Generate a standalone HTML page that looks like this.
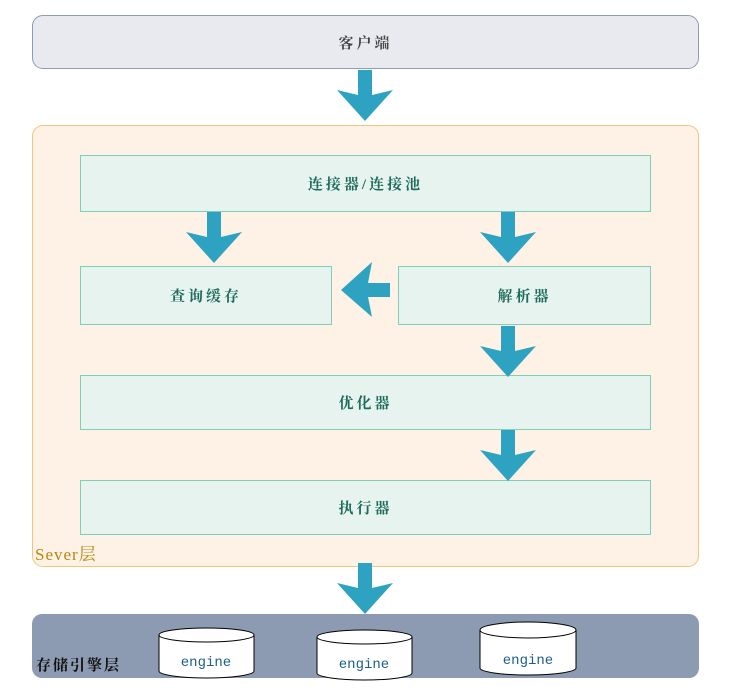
<!DOCTYPE html>
<html><head><meta charset="utf-8"><style>
body{margin:0;width:731px;height:700px;background:#fff;position:relative;overflow:hidden;font-family:"Liberation Serif","Noto Serif CJK SC",serif}
.b{position:absolute;box-sizing:border-box;display:flex;align-items:center;justify-content:center;font-size:15px;letter-spacing:3px;font-weight:bold}
.g{background:#e6f3ee;border:1px solid #7dcfb6;color:#1d6b5c}
svg{position:absolute}
</style></head><body>
<div class="b" style="left:32px;top:15px;width:667px;height:54px;background:#e8eaef;border:1px solid #8e9bb5;border-radius:11px;color:#444">客户端</div>
<div style="position:absolute;left:32px;top:125px;width:667px;height:442px;box-sizing:border-box;background:#fef1e6;border:1px solid #f5c27c;border-radius:11px"></div>
<div style="position:absolute;left:35px;top:540px;font-size:17px;color:#b8860b;letter-spacing:1px">Sever层</div>
<div class="b g" style="left:80px;top:155px;width:571px;height:57px">连接器/连接池</div>
<div class="b g" style="left:80px;top:266px;width:252px;height:59px">查询缓存</div>
<div class="b g" style="left:398px;top:266px;width:253px;height:59px">解析器</div>
<div class="b g" style="left:80px;top:375px;width:571px;height:55px">优化器</div>
<div class="b g" style="left:80px;top:480px;width:571px;height:55px">执行器</div>
<div style="position:absolute;left:32px;top:614px;width:667px;height:64px;background:#8c9bb2;border-radius:10px"></div>
<div style="position:absolute;left:36px;top:654px;font-size:15px;font-weight:bold;letter-spacing:2px;color:#111">存储引擎层</div>
<svg width="731" height="700" style="left:0;top:0">
<defs><polygon id="a" points="21,0 35,0 35,25 56,20 28,51 0,20 21,25" fill="#2ea3c1"/></defs>
<use href="#a" x="337" y="70"/>
<use href="#a" x="186" y="212"/>
<use href="#a" x="480" y="212"/>
<use href="#a" x="480" y="326"/>
<use href="#a" x="480" y="430"/>
<use href="#a" x="337" y="563"/>
<polygon points="390,283 390,297 368,297 372,317 341,290 372,262 368,283" fill="#2ea3c1"/>
<g stroke="#000" stroke-width="1" fill="#fff">
<path d="M159,635 V671 A47.5,7 0 0 0 254,671 V635"/><ellipse cx="206.5" cy="635" rx="47.5" ry="7"/>
<path d="M317,637 V673 A47.5,7 0 0 0 412,673 V637"/><ellipse cx="364.5" cy="637" rx="47.5" ry="7"/>
<path d="M480,630 V668 A48,7 0 0 0 576,668 V630"/><ellipse cx="528" cy="630" rx="48" ry="8"/>
</g>
<g font-family="Liberation Mono, monospace" font-size="14" fill="#1d5f8a" text-anchor="middle">
<text x="206" y="666">engine</text><text x="364" y="668">engine</text><text x="528" y="664">engine</text>
</g>
</svg>
</body></html>
